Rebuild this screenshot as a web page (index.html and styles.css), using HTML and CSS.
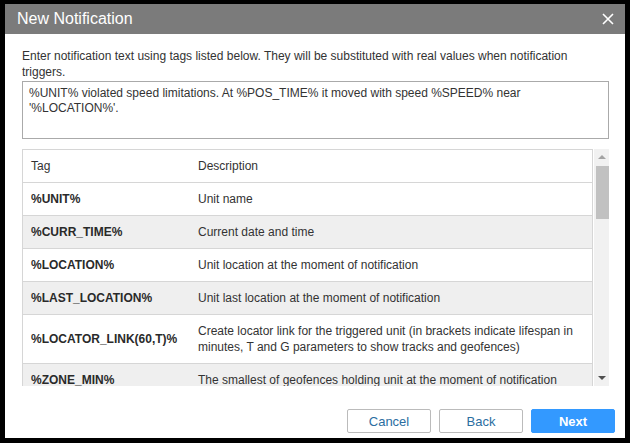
FILE: index.html
```html
<!DOCTYPE html>
<html>
<head>
<meta charset="utf-8">
<link rel="stylesheet" href="styles.css">
</head>
<body>
<div class="frame">
  <div class="dialog">
    <div class="header">
      <span class="title">New Notification</span>
      <svg class="close" width="12" height="12" viewBox="0 0 12 12"><path d="M1 1L11 11M11 1L1 11" stroke="#fff" stroke-width="1.6"/></svg>
    </div>
    <div class="body">
      <p class="intro">Enter notification text using tags listed below. They will be substituted with real values when notification triggers.</p>
      <div class="textarea">%UNIT% violated speed limitations. At %POS_TIME% it moved with speed %SPEED% near '%LOCATION%'.</div>
      <div class="tablewrap">
        <div class="table">
          <div class="row head"><div class="tag">Tag</div><div class="desc">Description</div></div>
          <div class="row"><div class="tag b">%UNIT%</div><div class="desc">Unit name</div></div>
          <div class="row alt"><div class="tag b">%CURR_TIME%</div><div class="desc">Current date and time</div></div>
          <div class="row"><div class="tag b">%LOCATION%</div><div class="desc">Unit location at the moment of notification</div></div>
          <div class="row alt"><div class="tag b">%LAST_LOCATION%</div><div class="desc">Unit last location at the moment of notification</div></div>
          <div class="row tall"><div class="tag b">%LOCATOR_LINK(60,T)%</div><div class="desc">Create locator link for the triggered unit (in brackets indicate lifespan in minutes, T and G parameters to show tracks and geofences)</div></div>
          <div class="row alt"><div class="tag b">%ZONE_MIN%</div><div class="desc">The smallest of geofences holding unit at the moment of notification</div></div>
        </div>
        <div class="scrollbar">
          <div class="arrow up"></div>
          <div class="thumb"></div>
          <div class="track"></div>
          <div class="arrow down"></div>
        </div>
      </div>
    </div>
    <div class="footer">
      <button class="btn">Cancel</button>
      <button class="btn">Back</button>
      <button class="btn primary">Next</button>
    </div>
  </div>
</div>
</body>
</html>
```

FILE: styles.css
```css
html, body {
  margin: 0;
  padding: 0;
  background: #fff;
}
body {
  font-family: "Liberation Sans", Arial, sans-serif;
  color: #333;
  font-size: 12px;
}
.frame {
  width: 630px;
  height: 443px;
  box-sizing: border-box;
  background: #000;
  padding: 4px 5px 5px 5px;
}
.dialog {
  width: 620px;
  height: 434px;
  background: #fff;
  display: flex;
  flex-direction: column;
}
.header {
  height: 30px;
  background: #7b7b7b;
  display: flex;
  align-items: center;
  justify-content: space-between;
  padding: 0 11px 0 12px;
  flex-shrink: 0;
}
.title {
  color: #fff;
  font-size: 16px;
}
.close {
  display: block;
}
.body {
  padding: 14px 16px 0 17px;
  display: flex;
  flex-direction: column;
}
.intro {
  margin: 0;
  line-height: 16px;
}
.textarea {
  margin-top: 1px;
  height: 58px;
  box-sizing: border-box;
  border: 1px solid #aaa;
  padding: 4px 6px;
  line-height: 15px;
}
.tablewrap {
  margin-top: 10px;
  height: 237px;
  display: flex;
  overflow: hidden;
}
.table {
  width: 571px;
  border: 1px solid #d6d6d6;
  border-bottom: none;
  box-sizing: border-box;
  flex-shrink: 0;
}
.row {
  display: flex;
  align-items: center;
  height: 33px;
  border-bottom: 1px solid #d6d6d6;
  box-sizing: border-box;
}
.row.alt { background: #efefef; }
.row.tall { height: 49px; }
.tag {
  width: 167px;
  padding-left: 8px;
  flex-shrink: 0;
}
.tag.b { font-weight: bold; color: #2a2a2a; }
.desc {
  flex: 1;
  line-height: 16px;
  padding-right: 6px;
}
.scrollbar {
  width: 17px;
  margin-left: 1px;
  background: #f1f1f1;
  display: flex;
  flex-direction: column;
  align-items: center;
}
.arrow {
  height: 17px;
  width: 17px;
  position: relative;
}
.arrow::after {
  content: "";
  position: absolute;
  left: 4px;
  border-left: 4px solid transparent;
  border-right: 4px solid transparent;
}
.arrow.up::after {
  top: 6px;
  border-bottom: 4px solid #a3a3a3;
}
.arrow.down::after {
  top: 7px;
  border-top: 4px solid #505050;
}
.thumb {
  width: 13px;
  height: 53px;
  background: #c1c1c1;
}
.track { flex: 1; }
.footer {
  flex: 1;
  display: flex;
  justify-content: flex-end;
  align-items: flex-start;
  gap: 8px;
  padding: 23px 10px 0 0;
  box-sizing: border-box;
}
.btn {
  width: 84px;
  height: 24px;
  border: 1px solid #bbb;
  border-radius: 2px;
  background: #fff;
  color: #2b6ea1;
  font-family: "Liberation Sans", Arial, sans-serif;
  font-size: 13px;
  padding: 0;
}
.btn.primary {
  background: #3399ff;
  border-color: #3399ff;
  color: #fff;
  font-weight: bold;
}
```
